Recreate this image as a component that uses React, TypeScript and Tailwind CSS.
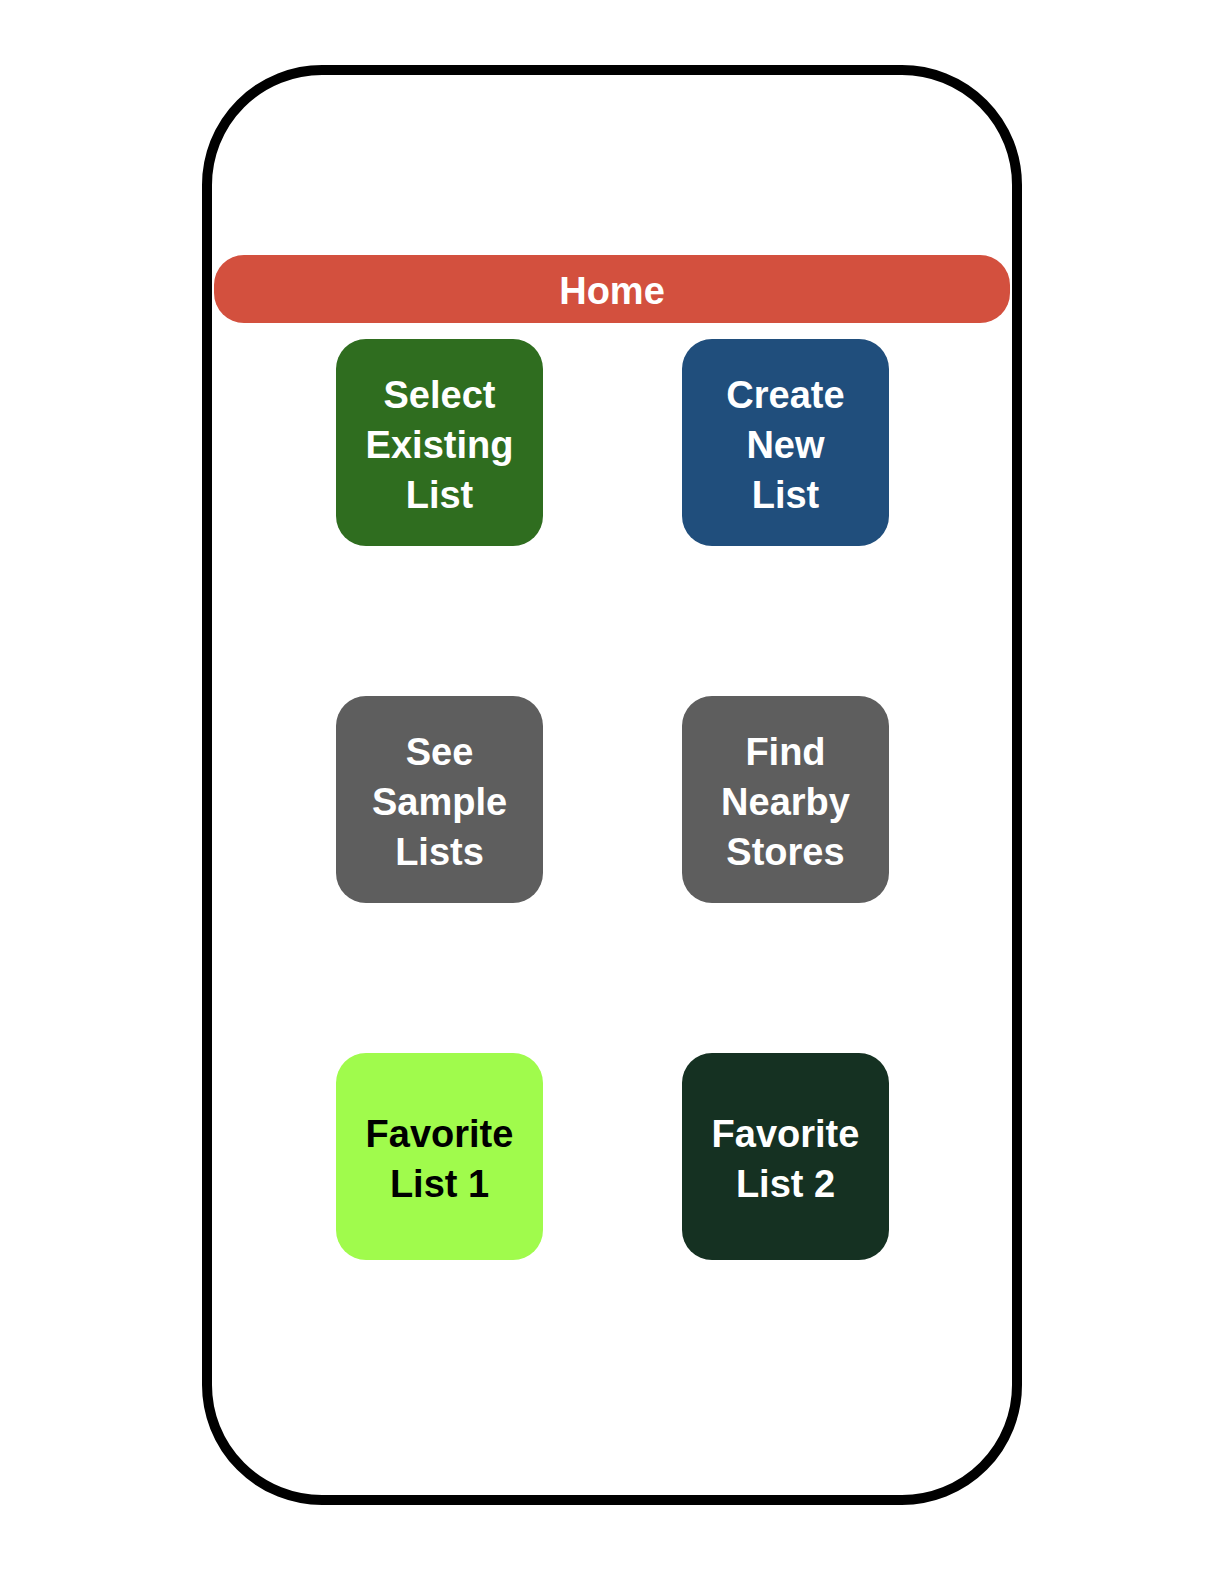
import React from "react";

const buttons = [
  { lines: ["Select", "Existing", "List"], bg: "bg-[#2f6d1f]", fg: "text-white" },
  { lines: ["Create", "New", "List"], bg: "bg-[#204e7c]", fg: "text-white" },
  { lines: ["See", "Sample", "Lists"], bg: "bg-[#5e5e5e]", fg: "text-white" },
  { lines: ["Find", "Nearby", "Stores"], bg: "bg-[#5e5e5e]", fg: "text-white" },
  { lines: ["Favorite", "List 1"], bg: "bg-[#a0fb4c]", fg: "text-black" },
  { lines: ["Favorite", "List 2"], bg: "bg-[#153122]", fg: "text-white" },
];

export default function App() {
  return (
    <div
      className="w-[1224px] h-[1584px] bg-white pt-[65px] pl-[202px]"
      style={{ fontFamily: '"Liberation Sans", Arial, sans-serif' }}
    >
      <div className="w-[820px] h-[1440px] border-[10px] border-black rounded-[120px] pt-[180px] px-[2px]">
        <div className="h-[68px] rounded-[30px] bg-[#d3503e] flex items-center justify-center pt-[4px] text-white font-bold text-[38px]">
          Home
        </div>
        <div className="grid grid-cols-[207px_207px] gap-x-[139px] gap-y-[150px] mt-[16px] ml-[122px]">
          {buttons.map((b, i) => (
            <div
              key={i}
              className={`w-[207px] h-[207px] rounded-[30px] flex flex-col items-center justify-center pt-[4px] font-bold text-[38px] leading-[50px] ${b.bg} ${b.fg}`}
            >
              {b.lines.map((l, j) => (
                <span key={j}>{l}</span>
              ))}
            </div>
          ))}
        </div>
      </div>
    </div>
  );
}
